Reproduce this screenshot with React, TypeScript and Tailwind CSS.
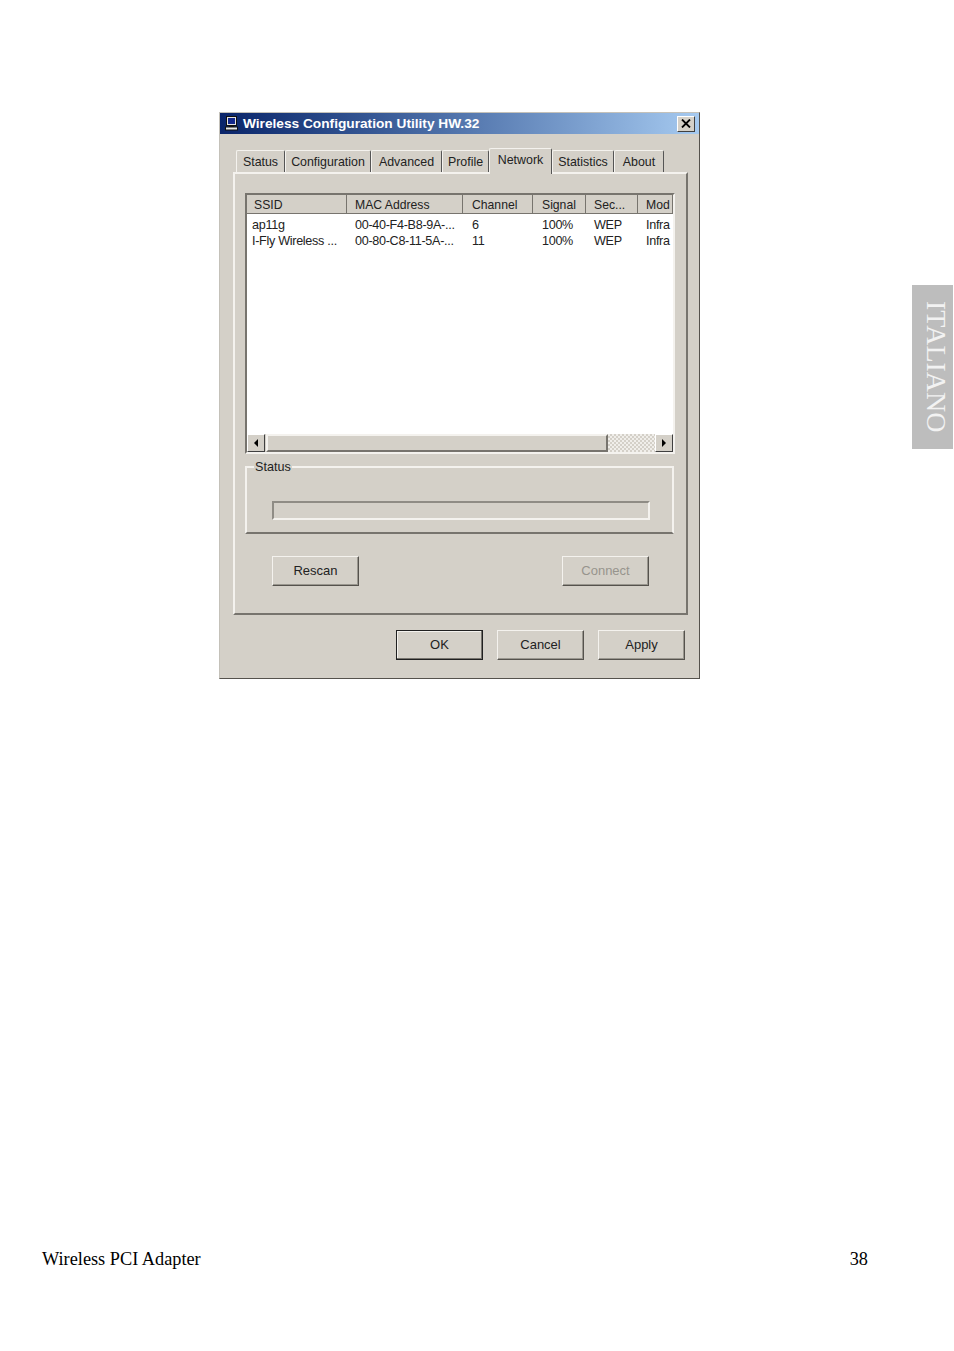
const TABS = [
  { label: 'Status', width: 'w-[49px]' },
  { label: 'Configuration', width: 'w-[86px]' },
  { label: 'Advanced', width: 'w-[71px]' },
  { label: 'Profile', width: 'w-[47px]' },
];

const TABS_RIGHT = [
  { label: 'Statistics', width: 'w-[62px]' },
  { label: 'About', width: 'w-[50px]' },
];

const COLUMNS = [
  { label: 'SSID', width: 'w-[100px]', pad: 'pl-[7px]' },
  { label: 'MAC Address', width: 'w-[116px]', pad: 'pl-[8px]' },
  { label: 'Channel', width: 'w-[70px]', pad: 'pl-[9px]' },
  { label: 'Signal', width: 'w-[53px]', pad: 'pl-[9px]' },
  { label: 'Sec...', width: 'w-[52px]', pad: 'pl-[8px]' },
  { label: 'Mod', width: 'w-[35px]', pad: 'pl-[8px]' },
];

const ROWS = [
  ['ap11g', '00-40-F4-B8-9A-...', '6', '100%', 'WEP', 'Infra'],
  ['I-Fly Wireless ...', '00-80-C8-11-5A-...', '11', '100%', 'WEP', 'Infra'],
];

const CELL_STYLES = [
  { width: 'w-[100px]', pad: 'pl-[5px]' },
  { width: 'w-[116px]', pad: 'pl-[8px]' },
  { width: 'w-[70px]', pad: 'pl-[9px]' },
  { width: 'w-[53px]', pad: 'pl-[9px]' },
  { width: 'w-[52px]', pad: 'pl-[8px]' },
  { width: 'w-[35px]', pad: 'pl-[8px]' },
];

const raised = 'border border-t-white border-l-white border-r-[#404040] border-b-[#404040]';

const WinButton = ({ label, disabled, isDefault }: { label: string; disabled?: boolean; isDefault?: boolean }) => (
  <div
    className={`box-border flex h-[30px] w-[87px] items-center justify-center bg-[#d4d0c8] text-[13px] ${
      isDefault
        ? 'border border-[#202020] shadow-[inset_-1px_-1px_0_#77746e,inset_1px_1px_0_#f4f2ee]'
        : 'border border-t-[#f4f2ee] border-l-[#f4f2ee] border-r-[#55524d] border-b-[#55524d] shadow-[inset_-1px_-1px_0_#9a978f]'
    } ${disabled ? 'text-[#97948d]' : 'text-[#222]'}`}
  >
    {label}
  </div>
);

const ScrollArrow = ({ points }: { points: string }) => (
  <div className={`box-border flex h-[18px] w-[18px] shrink-0 items-center justify-center bg-[#d4d0c8] ${raised}`}>
    <svg width="6" height="10" viewBox="0 0 6 10">
      <polygon points={points} fill="#000" />
    </svg>
  </div>
);

const TabLabel = ({ label, width }: { label: string; width: string }) => (
  <div
    className={`box-border flex h-[22px] ${width} items-center justify-center rounded-t-[2px] border border-b-0 border-t-[#f4f2ee] border-l-[#f4f2ee] border-r-[#555] bg-[#d4d0c8] pt-[2px] text-[12.4px] text-[#222]`}
  >
    {label}
  </div>
);

export default function App() {
  return (
    <div className="relative flex h-[1351px] w-[954px] flex-col overflow-hidden bg-white font-['Liberation_Sans',sans-serif]">
      <div className="flex items-start">
        <div className="ml-[219px] mt-[112px] box-border h-[567px] w-[481px] border border-t-[#c4c1b9] border-l-[#c4c1b9] border-r-[#55524d] border-b-[#55524d] bg-[#d4d0c8]">
          <div className="flex h-[21px] items-center bg-gradient-to-r from-[#0a246a] to-[#a6caf0] pl-[4px] pr-[4px]">
            <svg width="15" height="15" viewBox="0 0 15 15" className="shrink-0">
              <rect x="2.5" y="0.5" width="10" height="9" fill="#e4e4e4" stroke="#101010" strokeWidth="1" />
              <rect x="4" y="2" width="7" height="6" fill="#14288c" />
              <rect x="5" y="10" width="5" height="1" fill="#101010" />
              <rect x="1.5" y="11" width="12" height="3" fill="#e8e8e8" stroke="#101010" strokeWidth="1" />
            </svg>
            <span className="ml-[4px] pt-[2px] text-[13.7px] font-bold text-white">Wireless Configuration Utility HW.32</span>
            <div className={`ml-auto box-border flex h-[16px] w-[18px] items-center justify-center bg-[#d4d0c8] ${raised}`}>
              <svg width="10" height="9" viewBox="0 0 10 9">
                <path d="M1 0.5 L9 8.5 M9 0.5 L1 8.5" stroke="#000" strokeWidth="1.8" />
              </svg>
            </div>
          </div>

          <div className="ml-[16px] mt-[13px] flex h-[25px] items-end">
            {TABS.map((tab) => (
              <TabLabel key={tab.label} label={tab.label} width={tab.width} />
            ))}
            <div className="relative z-10 -mb-[2px] box-border flex h-[26px] w-[63px] items-start justify-center rounded-t-[2px] border border-b-0 border-t-[#f4f2ee] border-l-[#f4f2ee] border-r-[#555] bg-[#d4d0c8] pt-[2px] text-[12.4px] text-[#222]">
              Network
            </div>
            {TABS_RIGHT.map((tab) => (
              <TabLabel key={tab.label} label={tab.label} width={tab.width} />
            ))}
          </div>

          <div className="ml-[13px] box-border h-[443px] w-[455px] border-2 border-t-[#f4f2ee] border-l-[#f4f2ee] border-r-[#77746e] border-b-[#77746e] pl-[10px] pt-[19px]">
            <div className="box-border h-[261px] w-[430px] border-2 border-t-[#77746e] border-l-[#77746e] border-r-[#f4f2ee] border-b-[#f4f2ee] bg-white">
              <div className="flex h-[19px] bg-[#d4d0c8]">
                {COLUMNS.map((col) => (
                  <div
                    key={col.label}
                    className={`box-border flex ${col.width} items-center overflow-hidden border-r border-b border-r-[#77746e] border-b-[#77746e] ${col.pad} pt-[3px] text-[12.2px] whitespace-nowrap text-[#222]`}
                  >
                    {col.label}
                  </div>
                ))}
              </div>
              <div className="h-[220px] pt-[3px]">
                {ROWS.map((row) => (
                  <div key={row[0]} className="flex h-[16px]">
                    {row.map((cell, i) => (
                      <div
                        key={i}
                        className={`flex ${CELL_STYLES[i].width} items-center overflow-hidden ${CELL_STYLES[i].pad} text-[12.6px] tracking-[-0.3px] whitespace-nowrap text-[#222]`}
                      >
                        {cell}
                      </div>
                    ))}
                  </div>
                ))}
              </div>
              <div className="flex h-[18px] bg-[#d4d0c8]">
                <ScrollArrow points="5,1 1,5 5,9" />
                <div className="ml-[1px] box-border h-[18px] w-[342px] border-2 border-t-[#f4f2ee] border-l-[#f4f2ee] border-r-[#77746e] border-b-[#77746e] bg-[#d4d0c8]" />
                <div className="h-[18px] flex-1 bg-[repeating-conic-gradient(#d4d0c8_0_25%,#f0eeea_0_50%)] bg-[length:4px_4px]" />
                <ScrollArrow points="1,1 5,5 1,9" />
              </div>
            </div>

            <fieldset className="mt-[5px] box-border h-[75px] w-[429px] border-2 border-t-[#f4f2ee] border-l-[#f4f2ee] border-r-[#f4f2ee] border-b-[#77746e]">
              <legend className="ml-[7px] px-[1px] text-[12.6px] leading-[16px] text-[#222]">Status</legend>
              <div className="ml-[25px] mt-[26px] box-border h-[19px] w-[378px] border-2 border-t-[#8f8c85] border-l-[#8f8c85] border-r-[#f4f2ee] border-b-[#f4f2ee]" />
            </fieldset>

            <div className="mt-[22px] flex w-[404px] justify-between pl-[27px]">
              <WinButton label="Rescan" />
              <WinButton label="Connect" disabled />
            </div>
          </div>

          <div className="ml-[176px] mt-[15px] flex w-[289px] justify-between">
            <WinButton label="OK" isDefault />
            <WinButton label="Cancel" />
            <WinButton label="Apply" />
          </div>
        </div>

        <div className="ml-[212px] mt-[285px] flex h-[164px] w-[41px] items-center justify-center bg-[#bdbdbd] pl-[6px]">
          <span className="font-['Liberation_Serif',serif] text-[28px] whitespace-nowrap text-[#f2f2f2] [writing-mode:vertical-rl]">
            ITALIANO
          </span>
        </div>
      </div>

      <div className="mt-[570px] flex pl-[42px] pr-[86px] font-['Liberation_Serif',serif] text-[18.3px] leading-[21px] text-black">
        <span>Wireless PCI Adapter</span>
        <span className="ml-auto">38</span>
      </div>
    </div>
  );
}
